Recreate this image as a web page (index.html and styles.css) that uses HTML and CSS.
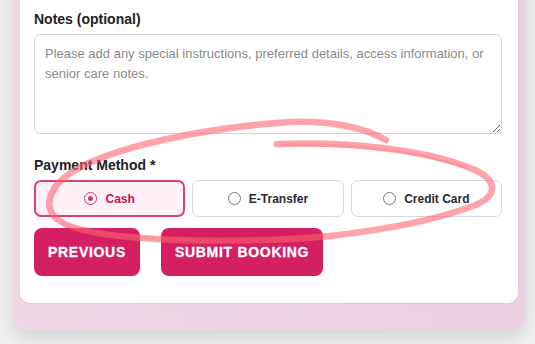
FILE: index.html
```html
<!DOCTYPE html>
<html lang="en">
<head>
<meta charset="utf-8">
<link rel="stylesheet" href="styles.css">
</head>
<body>
<div class="panel">
  <div class="card">
    <label class="label" for="notes">Notes (optional)</label>
    <textarea id="notes" class="notes" placeholder="Please add any special instructions, preferred details, access information, or senior care notes."></textarea>

    <div class="label pay-label">Payment Method *</div>
    <div class="options">
      <label class="option selected"><span class="radio on"></span>Cash</label>
      <label class="option"><span class="radio"></span>E-Transfer</label>
      <label class="option"><span class="radio"></span>Credit Card</label>
    </div>

    <div class="actions">
      <button class="btn">PREVIOUS</button>
      <button class="btn">SUBMIT BOOKING</button>
    </div>

    <svg class="scribble" width="535" height="344" viewBox="0 0 535 344">
      <path d="M277 144 C 350 141, 430 150, 475 170 C 500 182, 497 198, 470 207 C 440 218, 400 228, 330 236 C 270 242, 180 242, 130 237 C 95 234, 64 228, 54 216 C 44 204, 50 186, 72 172 C 110 148, 200 128, 290 122 C 330 120, 365 128, 386 140"
        fill="none" stroke="rgba(255,96,108,0.58)" stroke-width="6.5" stroke-linecap="round" stroke-linejoin="round"/>
      <path d="M285 145 C 350 143, 420 152, 466 168" fill="none" stroke="rgba(255,96,108,0.22)" stroke-width="3" stroke-linecap="round"/>
      <path d="M62 224 C 90 233, 150 240, 230 241" fill="none" stroke="rgba(255,96,108,0.2)" stroke-width="3" stroke-linecap="round"/>
    </svg>
  </div>
</div>
</body>
</html>
```

FILE: styles.css
```css
html, body {
  margin: 0;
  padding: 0;
}
body {
  background: #f1f1f1;
  font-family: "Liberation Sans", Arial, sans-serif;
  width: 535px;
  height: 344px;
  overflow: hidden;
}
.panel {
  margin: -40px 0 0 12px;
  width: 514px;
  box-sizing: border-box;
  padding: 0 8px 27px 8px;
  background: linear-gradient(90deg, #efd7e6 0%, #ebd0e2 100%);
  border-radius: 0 0 14px 14px;
  box-shadow: 0 8px 18px rgba(0,0,0,0.12);
}
.card {
  position: relative;
  background: #fff;
  border-radius: 0 0 10px 10px;
  padding: 51px 15px 27px 14px;
  box-shadow: 0 1px 2px rgba(0,0,0,0.06);
}
.label {
  display: block;
  font-size: 14px;
  font-weight: bold;
  color: #222;
  margin-bottom: 7px;
}
.notes {
  display: block;
  width: 468px;
  height: 100px;
  box-sizing: border-box;
  border: 1px solid #d6d6d6;
  border-radius: 7px;
  padding: 9px 10px;
  font-family: "Liberation Sans", Arial, sans-serif;
  font-size: 13px;
  line-height: 20px;
  color: #333;
  resize: vertical;
  margin: 0;
}
.notes::placeholder {
  color: #8a8a8a;
}
.pay-label {
  margin-top: 23px;
  margin-bottom: 7px;
}
.options {
  display: grid;
  grid-template-columns: repeat(3, 1fr);
  gap: 7px;
  width: 468px;
}
.option {
  display: flex;
  align-items: center;
  justify-content: center;
  gap: 8px;
  height: 37px;
  box-sizing: border-box;
  border: 1px solid #d8d8dc;
  border-radius: 7px;
  font-size: 12px;
  font-weight: bold;
  color: #2b2b33;
  background: #fff;
}
.option.selected {
  border: 2px solid #dc3f76;
  background: #fff0f5;
  color: #c2185b;
}
.radio {
  width: 13px;
  height: 13px;
  box-sizing: border-box;
  border: 1px solid #7a7a7a;
  border-radius: 50%;
  background: #fff;
  position: relative;
}
.radio.on {
  border-color: #d8336d;
  border-width: 1.5px;
}
.radio.on::after {
  content: "";
  position: absolute;
  left: 2.5px;
  top: 2.5px;
  width: 5px;
  height: 5px;
  border-radius: 50%;
  background: #d8336d;
}
.actions {
  display: flex;
  gap: 21px;
  margin-top: 11px;
}
.btn {
  height: 48px;
  padding: 0 14px;
  border: none;
  border-radius: 8px;
  background: #d41f62;
  color: #fff;
  font-family: "Liberation Sans", Arial, sans-serif;
  font-size: 14px;
  font-weight: bold;
  letter-spacing: 0.7px;
  -webkit-text-stroke: 0.3px #fff;
}
.scribble {
  position: absolute;
  left: -20px;
  top: 40px;
  pointer-events: none;
}
```
